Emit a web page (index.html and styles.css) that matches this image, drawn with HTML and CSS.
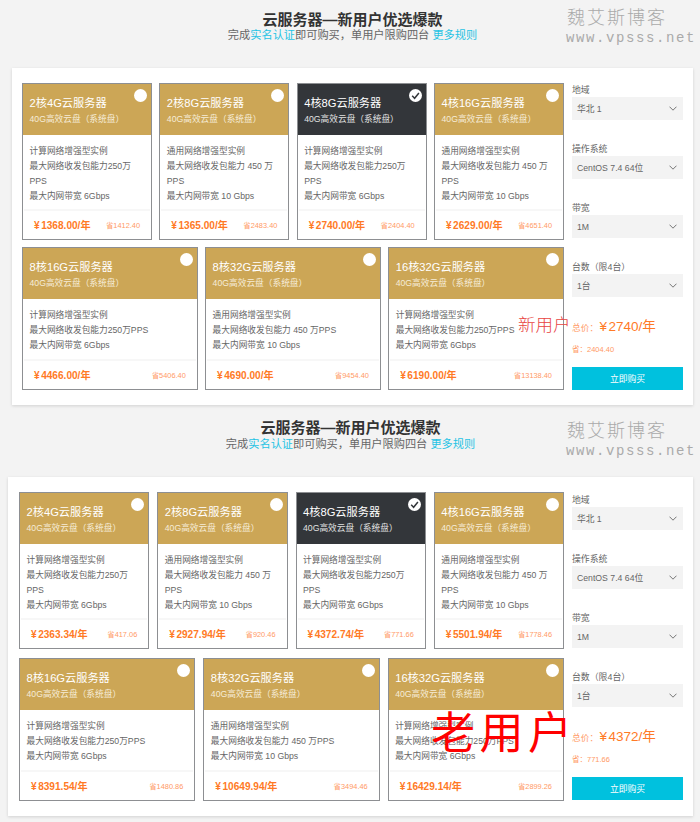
FILE: index.html
```html
<!DOCTYPE html>
<html lang="zh-CN">
<head>
<meta charset="utf-8">
<title>云服务器—新用户优选爆款</title>
<link rel="stylesheet" href="styles.css">
</head>
<body>
<section class="section section-new">
  <header class="intro">
    <h2 class="title">云服务器—新用户优选爆款</h2>
    <p class="sub">完成<a class="link">实名认证</a>即可购买，单用户限购四台 <a class="link">更多规则</a></p>
  </header>
  <div class="mark"><div class="mark-cn">魏艾斯博客</div><div class="mark-en">www.vpsss.net</div></div>
  <div class="panel">
    <div class="cards">
      <div class="row">
        <article class="card"><div class="head"><h3>2核4G云服务器</h3><p>40G高效云盘（系统盘）</p><span class="radio"></span></div><div class="body"><p>计算网络增强型实例</p><p>最大网络收发包能力250万PPS</p><p>最大内网带宽 6Gbps</p></div><div class="foot"><b>¥1368.00/年</b><span>省1412.40</span></div></article>
        <article class="card"><div class="head"><h3>2核8G云服务器</h3><p>40G高效云盘（系统盘）</p><span class="radio"></span></div><div class="body"><p>通用网络增强型实例</p><p>最大网络收发包能力 450 万PPS</p><p>最大内网带宽 10 Gbps</p></div><div class="foot"><b>¥1365.00/年</b><span>省2483.40</span></div></article>
        <article class="card selected"><div class="head"><h3>4核8G云服务器</h3><p>40G高效云盘（系统盘）</p><span class="radio"><svg viewBox="0 0 13 13" class="check"><path d="M3.2 6.8l2.4 2.5 4.3-5.2"/></svg></span></div><div class="body"><p>计算网络增强型实例</p><p>最大网络收发包能力250万PPS</p><p>最大内网带宽 6Gbps</p></div><div class="foot"><b>¥2740.00/年</b><span>省2404.40</span></div></article>
        <article class="card"><div class="head"><h3>4核16G云服务器</h3><p>40G高效云盘（系统盘）</p><span class="radio"></span></div><div class="body"><p>通用网络增强型实例</p><p>最大网络收发包能力 450 万PPS</p><p>最大内网带宽 10 Gbps</p></div><div class="foot"><b>¥2629.00/年</b><span>省4651.40</span></div></article>
      </div>
      <div class="row row-low">
        <article class="card"><div class="head"><h3>8核16G云服务器</h3><p>40G高效云盘（系统盘）</p><span class="radio"></span></div><div class="body"><p>计算网络增强型实例</p><p>最大网络收发包能力250万PPS</p><p>最大内网带宽 6Gbps</p></div><div class="foot"><b>¥4466.00/年</b><span>省5406.40</span></div></article>
        <article class="card"><div class="head"><h3>8核32G云服务器</h3><p>40G高效云盘（系统盘）</p><span class="radio"></span></div><div class="body"><p>通用网络增强型实例</p><p>最大网络收发包能力 450 万PPS</p><p>最大内网带宽 10 Gbps</p></div><div class="foot"><b>¥4690.00/年</b><span>省9454.40</span></div></article>
        <article class="card"><div class="head"><h3>16核32G云服务器</h3><p>40G高效云盘（系统盘）</p><span class="radio"></span></div><div class="body"><p>计算网络增强型实例</p><p>最大网络收发包能力250万PPS</p><p>最大内网带宽 6Gbps</p></div><div class="foot"><b>¥6190.00/年</b><span>省13138.40</span></div></article>
      </div>
    </div>
    <aside class="side">
      <div class="field"><label>地域</label><div class="select"><span>华北 1</span><svg viewBox="0 0 8 5" class="chev"><path d="M.5.7L4 4.2 7.5.7"/></svg></div></div>
      <div class="field"><label>操作系统</label><div class="select"><span>CentOS 7.4 64位</span><svg viewBox="0 0 8 5" class="chev"><path d="M.5.7L4 4.2 7.5.7"/></svg></div></div>
      <div class="field"><label>带宽</label><div class="select"><span>1M</span><svg viewBox="0 0 8 5" class="chev"><path d="M.5.7L4 4.2 7.5.7"/></svg></div></div>
      <div class="field"><label>台数（限4台）</label><div class="select"><span>1台</span><svg viewBox="0 0 8 5" class="chev"><path d="M.5.7L4 4.2 7.5.7"/></svg></div></div>
      <div class="total">总价：<strong>¥2740/年</strong></div>
      <div class="save">省：2404.40</div>
      <button class="buy" type="button">立即购买</button>
    </aside>
  </div>
  <div class="tag tag-new">新用户</div>
</section>

<section class="section section-old">
  <header class="intro">
    <h2 class="title">云服务器—新用户优选爆款</h2>
    <p class="sub">完成<a class="link">实名认证</a>即可购买，单用户限购四台 <a class="link">更多规则</a></p>
  </header>
  <div class="mark"><div class="mark-cn">魏艾斯博客</div><div class="mark-en">www.vpsss.net</div></div>
  <div class="panel">
    <div class="cards">
      <div class="row">
        <article class="card"><div class="head"><h3>2核4G云服务器</h3><p>40G高效云盘（系统盘）</p><span class="radio"></span></div><div class="body"><p>计算网络增强型实例</p><p>最大网络收发包能力250万PPS</p><p>最大内网带宽 6Gbps</p></div><div class="foot"><b>¥2363.34/年</b><span>省417.06</span></div></article>
        <article class="card"><div class="head"><h3>2核8G云服务器</h3><p>40G高效云盘（系统盘）</p><span class="radio"></span></div><div class="body"><p>通用网络增强型实例</p><p>最大网络收发包能力 450 万PPS</p><p>最大内网带宽 10 Gbps</p></div><div class="foot"><b>¥2927.94/年</b><span>省920.46</span></div></article>
        <article class="card selected"><div class="head"><h3>4核8G云服务器</h3><p>40G高效云盘（系统盘）</p><span class="radio"><svg viewBox="0 0 13 13" class="check"><path d="M3.2 6.8l2.4 2.5 4.3-5.2"/></svg></span></div><div class="body"><p>计算网络增强型实例</p><p>最大网络收发包能力250万PPS</p><p>最大内网带宽 6Gbps</p></div><div class="foot"><b>¥4372.74/年</b><span>省771.66</span></div></article>
        <article class="card"><div class="head"><h3>4核16G云服务器</h3><p>40G高效云盘（系统盘）</p><span class="radio"></span></div><div class="body"><p>通用网络增强型实例</p><p>最大网络收发包能力 450 万PPS</p><p>最大内网带宽 10 Gbps</p></div><div class="foot"><b>¥5501.94/年</b><span>省1778.46</span></div></article>
      </div>
      <div class="row row-low">
        <article class="card"><div class="head"><h3>8核16G云服务器</h3><p>40G高效云盘（系统盘）</p><span class="radio"></span></div><div class="body"><p>计算网络增强型实例</p><p>最大网络收发包能力250万PPS</p><p>最大内网带宽 6Gbps</p></div><div class="foot"><b>¥8391.54/年</b><span>省1480.86</span></div></article>
        <article class="card"><div class="head"><h3>8核32G云服务器</h3><p>40G高效云盘（系统盘）</p><span class="radio"></span></div><div class="body"><p>通用网络增强型实例</p><p>最大网络收发包能力 450 万PPS</p><p>最大内网带宽 10 Gbps</p></div><div class="foot"><b>¥10649.94/年</b><span>省3494.46</span></div></article>
        <article class="card"><div class="head"><h3>16核32G云服务器</h3><p>40G高效云盘（系统盘）</p><span class="radio"></span></div><div class="body"><p>计算网络增强型实例</p><p>最大网络收发包能力250万PPS</p><p>最大内网带宽 6Gbps</p></div><div class="foot"><b>¥16429.14/年</b><span>省2899.26</span></div></article>
      </div>
    </div>
    <aside class="side">
      <div class="field"><label>地域</label><div class="select"><span>华北 1</span><svg viewBox="0 0 8 5" class="chev"><path d="M.5.7L4 4.2 7.5.7"/></svg></div></div>
      <div class="field"><label>操作系统</label><div class="select"><span>CentOS 7.4 64位</span><svg viewBox="0 0 8 5" class="chev"><path d="M.5.7L4 4.2 7.5.7"/></svg></div></div>
      <div class="field"><label>带宽</label><div class="select"><span>1M</span><svg viewBox="0 0 8 5" class="chev"><path d="M.5.7L4 4.2 7.5.7"/></svg></div></div>
      <div class="field"><label>台数（限4台）</label><div class="select"><span>1台</span><svg viewBox="0 0 8 5" class="chev"><path d="M.5.7L4 4.2 7.5.7"/></svg></div></div>
      <div class="total">总价：<strong>¥4372/年</strong></div>
      <div class="save">省：771.66</div>
      <button class="buy" type="button">立即购买</button>
    </aside>
  </div>
  <div class="tag tag-old">老用户</div>
</section>
</body>
</html>
```
FILE: styles.css
```css
* { box-sizing: border-box; margin: 0; padding: 0; }
html, body { background: #f3f3f3; }
body {
  width: 700px;
  height: 822px;
  overflow: hidden;
  font-family: "Liberation Sans", "Noto Sans CJK SC", sans-serif;
  color: #555;
}
.section { position: relative; }
.section-new { padding: 12px 7px 5px 12px; }
.section-old { padding: 10px 7px 0 8px; }
.intro { text-align: center; height: 30px; margin-bottom: 26px; }
.section-old .intro { height: 31px; }
.title { font-size: 15px; line-height: 16px; font-weight: 700; color: #333; }
.sub { font-size: 11.2px; line-height: 14px; color: #666; }
.section-old .sub { margin-top: 1px; }
.link { color: #1fc3e4; }

.mark { position: absolute; right: 4px; top: 8px; width: 130px; color: #aaa; }
.section-old .mark { top: 11px; }
.mark-cn { font-family: "Liberation Serif", "Noto Sans CJK SC", serif; font-size: 18px; line-height: 20px; letter-spacing: 2px; padding-left: 1px; font-weight: 300; }
.mark-en { font-family: "Liberation Mono", monospace; font-size: 14px; line-height: 16px; letter-spacing: 1.6px; margin-top: 2px; }

.tag { position: absolute; color: #e8443f; font-family: "Liberation Serif", "Noto Sans CJK SC", serif; white-space: nowrap; font-weight: 300; }
.tag-new { left: 518px; top: 312px; font-size: 17.5px; line-height: 26px; }
.tag-old { left: 431px; top: 301px; font-size: 44px; line-height: 48px; letter-spacing: 4.5px; color: #f00; font-weight: 400; }

.panel {
  display: flex;
  gap: 8px;
  background: #fff;
  padding: 15px 10px 15px;
  box-shadow: 0 1px 3px rgba(0, 0, 0, .14);
}
.section-old .panel { padding-left: 11px; }
.cards { flex: 1; min-width: 0; display: flex; flex-direction: column; gap: 7px; }
.section-old .cards { gap: 9px; }
.row { display: flex; gap: 7.3px; height: 157px; }
.section-old .row { gap: 8px; }
.row-low { height: 143px; }

.card {
  flex: 1 1 0;
  min-width: 0;
  display: flex;
  flex-direction: column;
  border: 1px solid #8d8f92;
  background: #fff;
}
.head {
  position: relative;
  height: 51px;
  padding: 11px 6.5px 0;
  background: #cca656;
  color: #fff;
  flex: none;
}
.head h3 { font-size: 11.2px; line-height: 16px; font-weight: 400; }
.head p { font-size: 8.7px; line-height: 13px; margin-top: 2px; color: #f6ecd8; }
.selected .head { background: #33363a; }
.selected .head p { color: #e2e2e2; }
.radio { position: absolute; top: 5px; right: 4px; width: 13px; height: 13px; border-radius: 50%; background: #fff; }
.check { display: block; width: 13px; height: 13px; fill: none; stroke: #33363a; stroke-width: 1.5; }

.body { flex: 1; padding: 8.5px 6.5px 0; font-size: 8.7px; line-height: 15px; color: #666; }
.foot {
  flex: none;
  height: 30px;
  margin: 0 1px;
  padding: 0 10px 2px;
  border-top: 2px solid #f7f7f7;
  display: flex;
  align-items: center;
  justify-content: space-between;
  white-space: nowrap;
}
.foot b { font-size: 10.1px; font-weight: 700; color: #ff7a26; }
.foot b::first-letter { margin-right: 1.5px; }
.foot span { font-size: 7.4px; color: #ff9a66; }

.side { width: 111px; flex: none; display: flex; flex-direction: column; }
.section-old .side { padding-top: 1px; }
.field { margin-bottom: 22px; }
.field label { display: block; font-size: 8.9px; line-height: 14px; color: #666; }
.select {
  height: 23px;
  background: #f3f3f3;
  padding: 0 6px 0 5px;
  display: flex;
  align-items: center;
  justify-content: space-between;
  font-size: 8.7px;
  color: #666;
}
.chev { width: 8px; height: 5px; fill: none; stroke: #666; stroke-width: .9; }
.total { font-size: 8.7px; line-height: 16px; color: #ff9a66; white-space: nowrap; }
.total strong { display: inline-block; margin-left: 1.5px; font-size: 13.5px; font-weight: 400; color: #ff7a26; }
.total strong::first-letter { margin-right: 1.5px; }
.save { margin-top: 8px; font-size: 7.5px; line-height: 12px; color: #ff9a66; }
.buy {
  margin-top: 11px;
  height: 23px;
  border: 0;
  background: #00c1de;
  color: #fff;
  font: 8.8px "Liberation Sans", "Noto Sans CJK SC", sans-serif;
}
```
